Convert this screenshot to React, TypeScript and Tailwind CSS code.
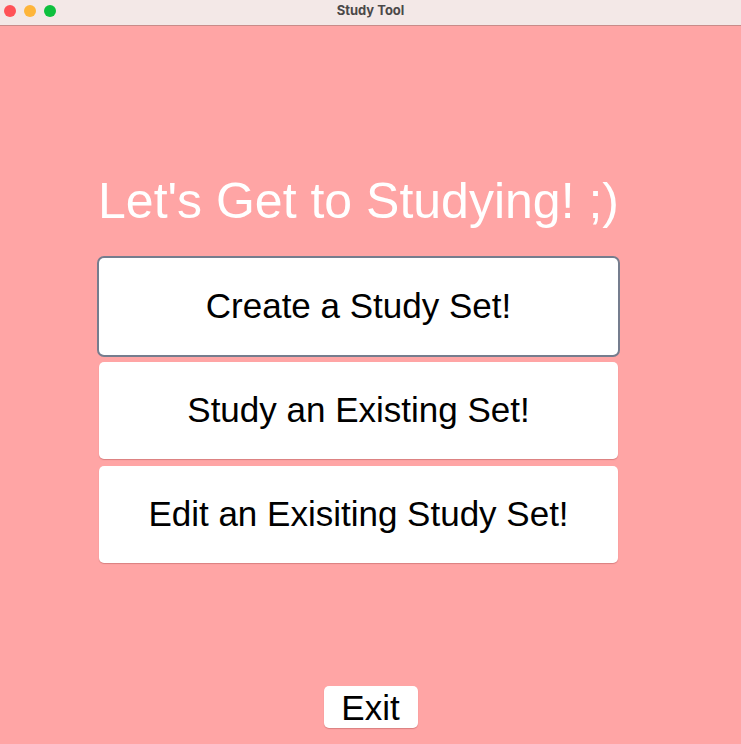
import React from "react";

const MENU = [
  "Create a Study Set!",
  "Study an Existing Set!",
  "Edit an Exisiting Study Set!",
];

function TitleBar() {
  return (
    <div className="relative flex h-[26px] items-center justify-center border-b border-[#c98b89] bg-[#f3e8e7]">
      <div className="absolute left-[4px] top-[5px] flex gap-[8px]">
        <span className="h-[12px] w-[12px] rounded-full bg-[#ff5257]" />
        <span className="h-[12px] w-[12px] rounded-full bg-[#feb53a]" />
        <span className="h-[12px] w-[12px] rounded-full bg-[#0ec03e]" />
      </div>
      <span className="-mt-[4px] text-[13px] font-bold text-[#4b4849] [font-family:Inter,'Noto_Sans',sans-serif]">
        Study Tool
      </span>
    </div>
  );
}

export default function App() {
  return (
    <div className="flex h-[744px] w-[741px] flex-col overflow-hidden bg-[#ffa5a5] [font-family:'Liberation_Sans',Arial,sans-serif]">
      <TitleBar />
      <div className="flex flex-1 flex-col">
        <div className="ml-[99px] mt-[146px] flex w-[519px] flex-col items-center">
          <h1 className="whitespace-nowrap text-[50px] leading-[58px] text-white">
            Let's Get to Studying! ;)
          </h1>
          <div className="mt-[28px] flex w-full flex-col gap-[7px]">
            {MENU.map((label, i) => (
              <button
                key={label}
                type="button"
                className={`h-[97px] w-full rounded-[5px] bg-white text-[35px] text-black shadow-[0_1px_1px_rgba(150,60,60,0.35)] ${
                  i === 0 ? "ring-2 ring-[#757d8e]" : ""
                }`}
              >
                {label}
              </button>
            ))}
          </div>
        </div>
        <div className="mt-auto mb-[16px] flex justify-center">
          <button
            type="button"
            className="h-[42px] w-[94px] rounded-[5px] bg-white text-[35px] leading-none text-black shadow-[0_1px_1px_rgba(150,60,60,0.35)]"
          >
            Exit
          </button>
        </div>
      </div>
    </div>
  );
}
